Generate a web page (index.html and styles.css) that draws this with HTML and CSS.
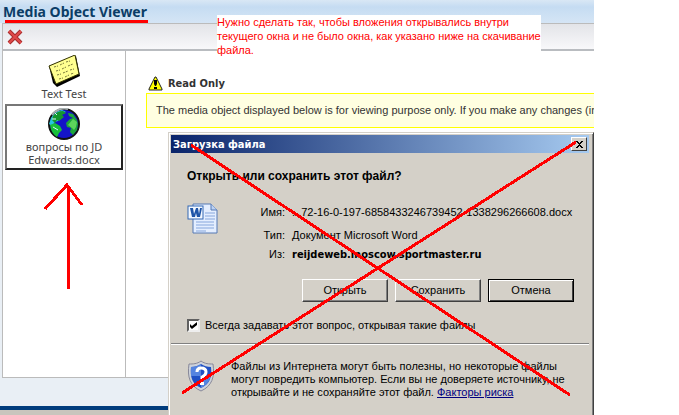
FILE: index.html
```
<!DOCTYPE html>
<html lang="ru">
<head>
  <meta charset="UTF-8">
  <meta name="viewport" content="width=device-width, initial-scale=1">
  <title>Media Object Viewer</title>
  <link rel="stylesheet" href="styles.css">
</head>
<body>
  <div class="viewer">
    <h1 class="viewer-title">Media Object Viewer</h1>
    <div class="frame">
      <div class="toolbar">
        <button type="button" class="tool" aria-label="Close">
          <svg width="16" height="16" viewBox="0 0 16 16">
            <path d="M2 2L14 14M14 2L2 14" stroke="#a82c2c" stroke-width="4"/>
            <path d="M2 2L14 14M14 2L2 14" stroke="#e04a4a" stroke-width="2"/>
          </svg>
        </button>
      </div>
      <div class="panes">
        <div class="items">
          <button type="button" class="item">
            <svg width="32" height="32" viewBox="0 0 32 32">
              <path d="M1 11L28 1L32 21L9 32L5 28Z" fill="#000"/>
              <path d="M1 11L27 0L31 19L8 29Z" fill="#ffff90" stroke="#333300"/>
              <path d="M6 12l4-1m2-1l4-2m2-1l4-1M8 16l4-1m2-1l4-2m2-1l5-2M9 20l4-1m2-1l5-2m2-1l4-1M11 24l4-1m2-1l4-2m2-1l3-1" stroke="#77773a" stroke-dasharray="2 1"/>
            </svg>
            <span>Text Test</span>
          </button>
          <button type="button" class="item selected">
            <svg width="32" height="32" viewBox="0 0 32 32">
              <circle cx="16" cy="16" r="15" fill="#1414c8" stroke="#111" stroke-width="2"/>
              <path d="M3 10Q7 3 14 2L18 4L13 6L15 9L10 13L7 14L4 18L1 16Z" fill="#28c8dc"/>
              <path d="M5 8Q9 3 15 3L18 5L14 7L16 9L11 13L9 12L7 15L4 12Z" fill="#14962e"/>
              <path d="M2 17L7 15L12 18L14 22L11 25L9 29Q3 25 2 17Z" fill="#18c03a"/>
              <path d="M20 5L25 6L29 12L30 16L29 22L25 27L22 24L23 20L19 19L18 15L22 11L25 10L21 8Z" fill="#1ba53a"/>
              <path d="M20 17L25 11L29 14L28 19L26 22L24 20Z" fill="#5cd45c"/>
              <path d="M7 5L9 7M4 11h4M5 19l5 3" stroke="#d8f8ff"/>
              <path d="M4 7A15 15 0 0 1 20 1" fill="none" stroke="#a8b0b0" stroke-width="2"/>
            </svg>
            <span>вопросы по JD Edwards.docx</span>
          </button>
        </div>
        <div class="content">
          <h2 class="notice-title">
            <svg width="15" height="15" viewBox="0 0 15 15">
              <path d="M7 1h1L14 13v1H1v-1Z" fill="#ffff00" stroke="#222" stroke-linejoin="round"/>
              <path d="M6 4h3v4l-1 2H7L6 8ZM6 11h3v2H6Z" fill="#000"/>
            </svg>
            Read Only
          </h2>
          <p class="notice">The media object displayed below is for viewing purpose only. If you make any changes (inc</p>
        </div>
      </div>
    </div>
    <div class="statusbar"></div>
  </div>

  <div class="dialog" role="dialog" aria-labelledby="dialog-title">
    <div class="dialog-bar">
      <span id="dialog-title">Загрузка файла</span>
      <button type="button" class="close" aria-label="Закрыть">
        <svg width="9" height="7" viewBox="0 0 9 7">
          <path d="M1 0h2v1h1v1h1v-1h1v-1h2v1h-1v1h-1v1h-1v1h1v1h1v1h1v1h-2v-1h-1v-1h-1v1h-1v1h-2v-1h1v-1h1v-1h1v-1h-1v-1h-1v-1h-1Z" fill="#000"/>
        </svg>
      </button>
    </div>
    <div class="dialog-main">
      <h2 class="question">Открыть или сохранить этот файл?</h2>
      <div class="file">
        <svg width="32" height="32" viewBox="0 0 32 32">
          <path d="M6 1H24L30 7V30H6Z" fill="#e4eeff" stroke="#5578b4"/>
          <path d="M24 1V7H30" fill="#bdd2f2" stroke="#5578b4"/>
          <path d="M18 10h10M18 13h10M18 16h10M9 19h18M9 22h18M9 25h18M9 28h10" stroke="#86a6dc"/>
          <rect x="1" y="3" width="15" height="13" fill="#f3f8ff" stroke="#3568b4"/>
          <path d="M3 5h3l1 6 2-6h2l1 6 1-6h2l-2 9h-3L9 10 8 14H5Z" fill="#1f55a8"/>
        </svg>
        <dl class="facts">
          <dt>Имя:</dt>
          <dd>...72-16-0-197-6858433246739452-1338296266608.docx</dd>
          <dt class="type">Тип:</dt>
          <dd class="type">Документ Microsoft Word</dd>
          <dt>Из:</dt>
          <dd><b>reijdeweb.moscow.sportmaster.ru</b></dd>
        </dl>
      </div>
      <div class="buttons">
        <button type="button">Открыть</button>
        <button type="button">Сохранить</button>
        <button type="button" class="default">Отмена</button>
      </div>
      <label class="always">
        <input type="checkbox" checked>
        Всегда задавать этот вопрос, открывая такие файлы
      </label>
    </div>
    <div class="warning">
      <svg width="28" height="32" viewBox="0 0 28 32">
        <path d="M14 1C10 4 6 4 2 4C0 17 3 26 14 31C25 26 28 17 26 4C22 4 18 4 14 1Z" fill="#cdd2da" stroke="#889"/>
        <path d="M14 4C11 6 8 7 4 7C3 17 5 24 14 28C23 24 25 17 24 7C20 7 17 6 14 4Z" fill="#1f50c4"/>
        <path d="M14 4C11 6 8 7 4 7L4 16H14ZM14 16H24Q22 24 14 28Z" fill="#5484e0"/>
        <path d="M10 12Q10 8 14 8Q19 8 19 12Q19 15 15 17V20" fill="none" stroke="#fff" stroke-width="3"/>
        <rect x="13" y="22" width="4" height="3" fill="#fff"/>
      </svg>
      <p>Файлы из Интернета могут быть полезны, но некоторые файлы могут повредить компьютер. Если вы не доверяете источнику, не открывайте и не сохраняйте этот файл. <a href="#">Факторы риска</a></p>
    </div>
  </div>

  <p class="note">Нужно сделать так, чтобы вложения открывались внутри текущего окна и не было окна, как указано ниже на скачивание файла.</p>

  <svg class="marks" width="679" height="415" viewBox="0 0 679 415">
    <path d="M5 21H148M68 289V186M45 209L67 185L82 205M191 145L570 395M576 142L182 393"/>
  </svg>
</body>
</html>
```
FILE: styles.css
```
* {
  box-sizing: border-box;
}

body {
  position: relative;
  height: 100vh;
  margin: 0;
  overflow: hidden;
  background: #fff;
  color: #000;
  font-family: "Liberation Sans", Arial, sans-serif;
  font-size: 11px;
  line-height: 13px;
}

h1, h2, p, dl, dd {
  margin: 0;
}

button, input {
  margin: 0;
  font: inherit;
  color: inherit;
}

svg {
  display: block;
  flex: none;
}

/* viewer window */
.viewer {
  display: flex;
  flex-direction: column;
  height: 100%;
  margin-right: 85px;
  background: #e9eff5;
}

.viewer-title {
  height: 23px;
  padding: 2px 3px;
  background: linear-gradient(#d9e7f5, #c5dcf2 30%, #d5e5f5);
  color: #0b3d66;
  font-family: "Noto Sans", sans-serif;
  font-size: 14px;
  line-height: 20px;
}

.frame {
  display: flex;
  flex: 1;
  flex-direction: column;
  margin-left: 2px;
  border: 1px solid #bbb;
  border-width: 1px 0 1px 1px;
  background: #fff;
}

.toolbar {
  height: 27px;
  padding: 5px 4px;
  border-bottom: 2px solid #b9bcc0;
  background: linear-gradient(#e3e4e8, #f8f8fa);
}

.tool {
  padding: 0;
  border: 0;
  background: none;
}

.panes {
  display: flex;
  flex: 1;
}

.items {
  width: 123px;
  padding: 2px;
  border-right: 1px solid #bbb;
  font-family: "Noto Sans", sans-serif;
}

.item {
  display: flex;
  flex-direction: column;
  align-items: center;
  width: 118px;
  padding: 2px 8px;
  border: 0;
  background: none;
  color: #444;
}

.item.selected {
  margin-top: 2px;
  border: 2px solid #777;
  border-color: #777 #222 #222 #777;
}

.content {
  flex: 1;
  min-width: 0;
  padding: 25px 0 0 20px;
}

.notice-title {
  display: flex;
  align-items: center;
  gap: 5px;
  padding-left: 2px;
  color: #333;
  font-family: "DejaVu Sans Condensed", sans-serif;
  font-size: 11px;
}

.notice {
  height: 35px;
  margin-top: 2px;
  padding: 10px 0 10px 9px;
  overflow: hidden;
  border: 1px solid #ff0;
  border-right: 0;
  background: #ffffe1;
  color: #333;
  white-space: nowrap;
}

.statusbar {
  height: 37px;
  border-bottom: 5px solid #c9c5bd;
  background: linear-gradient(#e9eff5 28px, #003c7d 28px);
}

/* download dialog */
.dialog {
  position: absolute;
  top: 132px;
  right: 85px;
  bottom: -10px;
  left: 168px;
  padding: 2px 4px 0 2px;
  border: 1px solid #d4d0c8;
  border-right-color: #404040;
  box-shadow: inset 1px 1px #fff, inset -1px 0 #808080;
  background: #d4d0c8;
}

.dialog-bar {
  display: flex;
  align-items: center;
  justify-content: space-between;
  height: 18px;
  padding: 0 2px;
  background: linear-gradient(90deg, #0a246a, #a6caf0);
  color: #fff;
  font-family: "DejaVu Sans Condensed", sans-serif;
  font-weight: bold;
}

.close {
  display: grid;
  place-items: center;
  width: 16px;
  height: 14px;
  padding: 0;
  border: 1px solid #fff;
  border-color: #fff #404040 #404040 #fff;
  background: #d4d0c8;
}

.dialog-main {
  padding: 17px 15px 11px 16px;
  border-bottom: 1px solid #808080;
}

.question {
  font-size: 12px;
}

.file {
  display: flex;
  align-items: flex-start;
  margin-top: 20px;
}

.facts {
  display: grid;
  grid-template-columns: 66px auto;
  column-gap: 7px;
  line-height: 19px;
  white-space: nowrap;
}

.facts dt {
  text-align: right;
}

.facts .type {
  padding-top: 4px;
}

.facts b {
  font-family: "DejaVu Sans Condensed", sans-serif;
}

.buttons {
  display: flex;
  justify-content: flex-end;
  gap: 7px;
  margin-top: 15px;
}

.buttons button {
  width: 86px;
  height: 23px;
  padding: 0;
  border: 1px solid #fff;
  border-color: #fff #404040 #404040 #fff;
  box-shadow: inset -1px -1px #808080;
  background: #d4d0c8;
}

.buttons .default {
  border-color: #000;
  box-shadow: inset 1px 1px #fff, inset -1px -1px #404040;
}

.always {
  display: flex;
  align-items: center;
  gap: 5px;
  margin-top: 17px;
}

.always input {
  display: grid;
  place-items: center;
  width: 13px;
  height: 13px;
  appearance: none;
  border: 2px solid #808080;
  border-color: #606060 #eee #eee #606060;
  background: #fff;
}

.always input:checked::before {
  content: "";
  width: 7px;
  height: 7px;
  background: #000;
  clip-path: polygon(0 28%, 28% 57%, 100% 0, 100% 43%, 28% 100%, 0 71%);
}

.warning {
  display: flex;
  gap: 16px;
  padding: 15px 16px 0;
  border-top: 1px solid #fff;
}

.warning a {
  color: #000080;
}

/* annotations over the windows */
.note {
  position: absolute;
  top: 15px;
  left: 217px;
  width: 324px;
  background: #fff;
  color: #f00;
  line-height: 14px;
}

.marks {
  position: absolute;
  top: 0;
  left: 0;
  fill: none;
  stroke: #f00;
  stroke-width: 3;
  shape-rendering: crispEdges;
  pointer-events: none;
}
```
